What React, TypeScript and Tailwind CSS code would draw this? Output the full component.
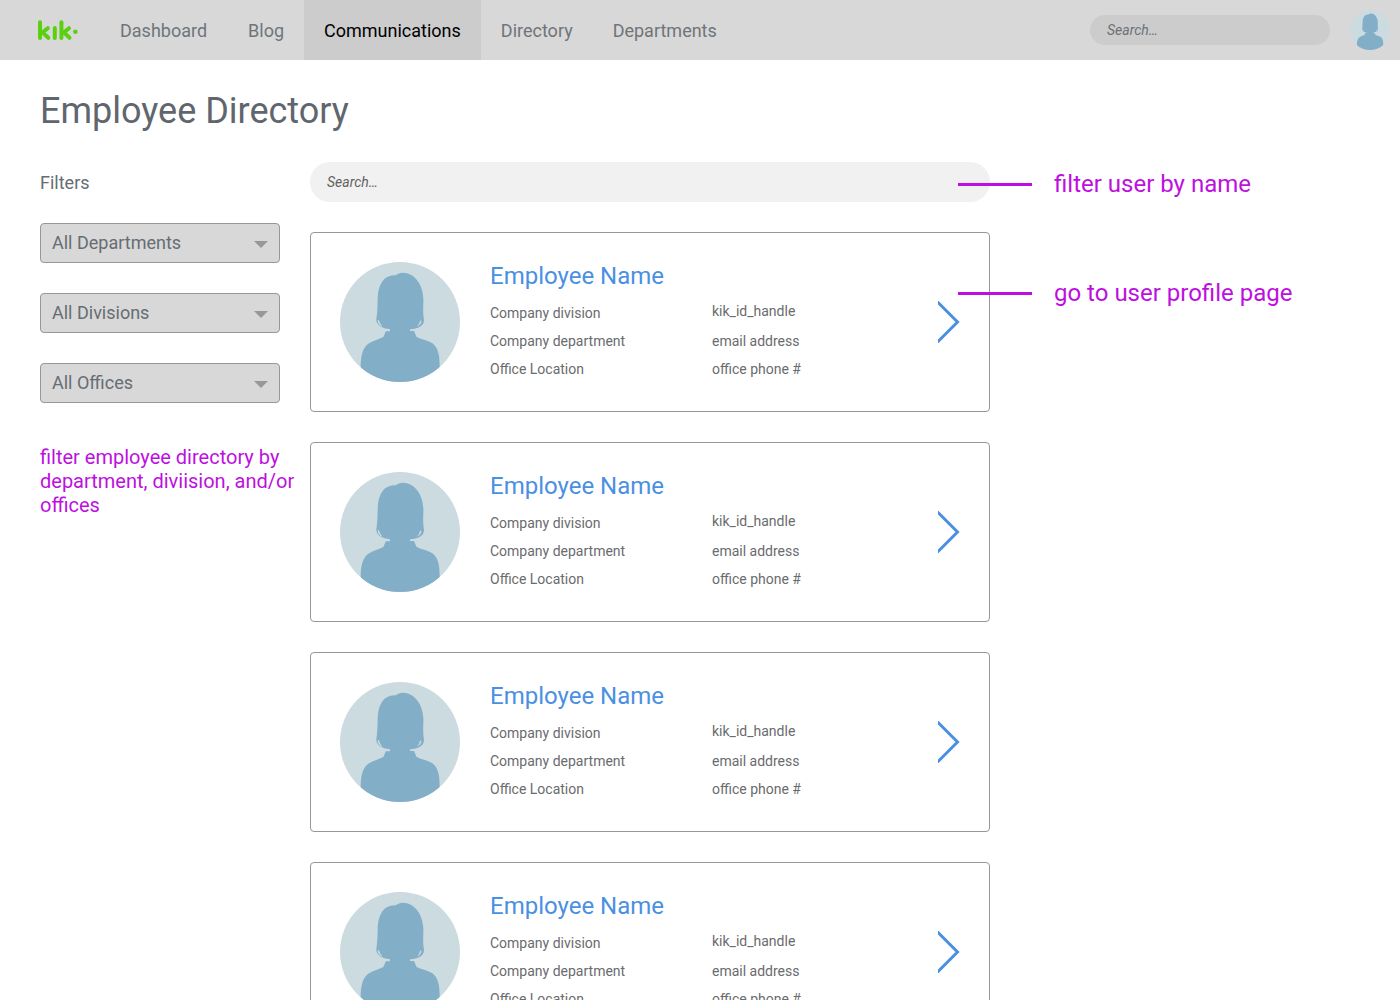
import { useId, useState } from "react";

const NAV_ITEMS = [
  "Dashboard",
  "Blog",
  "Communications",
  "Directory",
  "Departments",
];

const FILTERS = ["All Departments", "All Divisions", "All Offices"];

interface Employee {
  id: number;
  name: string;
  division: string;
  department: string;
  location: string;
  handle: string;
  email: string;
  phone: string;
}

const EMPLOYEES: Employee[] = [1, 2, 3, 4].map((id) => ({
  id,
  name: "Employee Name",
  division: "Company division",
  department: "Company department",
  location: "Office Location",
  handle: "kik_id_handle",
  email: "email address",
  phone: "office phone #",
}));

function Logo() {
  return (
    <svg
      role="img"
      aria-label="kik"
      width="42"
      height="24"
      viewBox="0 0 42 24"
      fill="none"
      stroke="#5bd011"
      strokeWidth="4"
      strokeLinecap="round"
      strokeLinejoin="round"
    >
      <line x1="4" y1="4.2" x2="4" y2="20" />
      <polyline points="11.8,10.2 6.5,14.4 12.3,19.8" />
      <line x1="18.8" y1="10" x2="18.8" y2="20" />
      <line x1="25.4" y1="4.2" x2="25.4" y2="20" />
      <polyline points="33,10.2 27.9,14.4 33.5,19.8" />
      <circle cx="39.4" cy="13.8" r="2.3" fill="#5bd011" stroke="none" />
    </svg>
  );
}

function Avatar({ className }: { className: string }) {
  const clipId = useId();

  return (
    <svg viewBox="0 0 120 120" className={className}>
      <clipPath id={clipId}>
        <circle cx="60" cy="60" r="60" />
      </clipPath>
      <g clipPath={`url(#${clipId})`}>
        <rect width="120" height="120" fill="#cbdbe0" />
        <path
          fill="#82afc7"
          d="M55.7 13.3C58 11.5 60 10.7 62.7 10.7C75 10.7 83 23 83.4 37C83.4 45 82.6 49 84 58C84 64 78 67 70 67.2V69H74C75 71 75.5 73 76.7 75C82 77.5 88 78.5 92.5 81.3C98.5 86 99.7 94 99.7 105V120H20.7V105C20.7 94 22.5 86 28.3 81.7C33 78.5 38 77.8 43.3 75C44.5 73 44.8 70.5 46 69.2H50V67.2C42 66.5 36.3 63 36.3 57.5C37.4 50 37.6 44 37.7 35C38.5 22 44 12.5 55.7 13.3Z"
        />
        <path
          fill="#cbdbe0"
          d="M37.6 58.5Q38 62.8 42.5 64.8Q39.5 61.5 38.9 58ZM81.4 58.5Q81.5 62.6 77 64.6Q79.6 62 80 58.8Z"
        />
      </g>
    </svg>
  );
}

function FilterSelect({ label }: { label: string }) {
  return (
    <button className="flex h-10 w-60 items-center justify-between rounded border border-[#979797] bg-[#d8d8d8] px-[11px] text-lg text-[#666d73]">
      <span>{label}</span>
      <svg width="14" height="7" viewBox="0 0 14 7" className="mt-[3px]">
        <polygon points="0,0 14,0 7,7" fill="#979797" />
      </svg>
    </button>
  );
}

function Note({ text }: { text: string }) {
  return (
    <div className="z-10 -ml-8 flex h-8 items-center text-2xl whitespace-nowrap text-[#bd10e0]">
      <span className="mr-[22px] h-[3px] w-[74px] bg-[#bd10e0]" />
      {text}
    </div>
  );
}

function EmployeeCard({ employee }: { employee: Employee }) {
  return (
    <article className="flex h-[180px] w-[680px] shrink-0 rounded border border-[#979797] bg-white p-[29px]">
      <Avatar className="size-[120px] shrink-0" />
      <div className="ml-[30px] flex-1">
        <h2 className="-mt-0.5 text-2xl text-[#4a90e2]">{employee.name}</h2>
        <div className="flex text-sm leading-7 text-[#6a6b6d]">
          <div className="mt-[7px] w-[222px]">
            <p>{employee.division}</p>
            <p>{employee.department}</p>
            <p>{employee.location}</p>
          </div>
          <div className="mt-[5px]">
            <p className="mb-0.5">{employee.handle}</p>
            <p>{employee.email}</p>
            <p>{employee.phone}</p>
          </div>
        </div>
      </div>
      <svg
        width="22"
        height="42"
        viewBox="0 0 22 42"
        fill="none"
        stroke="#4a90e2"
        strokeWidth="3"
        className="self-center"
      >
        <polyline points="-1,0.5 19.5,21 -1,41.5" />
      </svg>
    </article>
  );
}

export default function App() {
  const [query, setQuery] = useState("");

  return (
    <div className="h-[1000px] overflow-hidden bg-white font-[Roboto,sans-serif]">
      <header className="flex h-[60px] items-center bg-[#d8d8d8] pr-[10px] pl-9">
        <Logo />
        <nav className="ml-[22px] flex h-full text-lg">
          {NAV_ITEMS.map((item) => (
            <a
              key={item}
              className={
                item === "Communications"
                  ? "flex items-center bg-[#cccccc] px-5 pt-0.5 text-black"
                  : "flex items-center px-5 pt-0.5 text-[#6f757a] first:pr-[21px]"
              }
            >
              {item}
            </a>
          ))}
        </nav>
        <input
          placeholder="Search…"
          className="ml-auto h-[30px] w-60 rounded-full bg-[#cccccc] px-[17px] text-sm italic outline-none placeholder:text-[#6b7176]"
        />
        <Avatar className="ml-5 size-10" />
      </header>

      <main className="px-10 pt-[31px]">
        <h1 className="text-4xl text-[#5f666d]">Employee Directory</h1>

        <div className="mt-[31px] flex">
          <aside className="w-[270px] shrink-0">
            <p className="pt-[7px] text-lg text-[#666d73]">Filters</p>
            <div className="mt-[26px] flex flex-col gap-[30px]">
              {FILTERS.map((label) => (
                <FilterSelect key={label} label={label} />
              ))}
            </div>
            <p className="mt-[42px] text-xl leading-6 text-[#bd10e0]">
              filter employee directory by department, diviision, and/or offices
            </p>
          </aside>

          <section>
            <div className="flex items-center">
              <input
                value={query}
                onChange={(e) => setQuery(e.target.value)}
                placeholder="Search…"
                className="h-10 w-[680px] shrink-0 rounded-full bg-[#f1f1f1] px-[17px] text-sm italic outline-none placeholder:text-[#626262]"
              />
              <div className="mt-1">
                <Note text="filter user by name" />
              </div>
            </div>
            <div className="mt-[30px] flex flex-col gap-[30px]">
              {EMPLOYEES.map((employee, i) => (
                <div key={employee.id} className="flex">
                  <EmployeeCard employee={employee} />
                  {i === 0 && (
                    <div className="pt-[45px]">
                      <Note text="go to user profile page" />
                    </div>
                  )}
                </div>
              ))}
            </div>
          </section>
        </div>
      </main>
    </div>
  );
}
